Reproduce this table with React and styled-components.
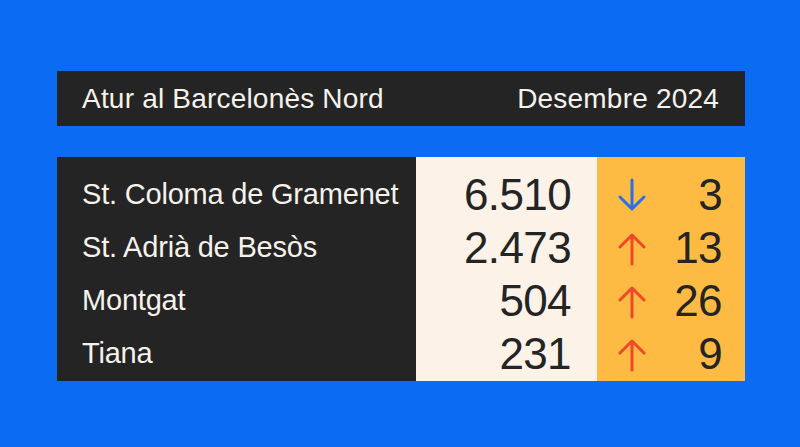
import styled, { createGlobalStyle } from 'styled-components';

const GlobalStyle = createGlobalStyle`
  html, body {
    margin: 0;
    padding: 0;
    background: #0b6cf3;
  }

  body {
    font-family: 'Liberation Sans', Arial, sans-serif;
  }
`;

const Page = styled.div`
  width: 800px;
  height: 447px;
  box-sizing: border-box;
  padding: 71px 0 0 57px;
  display: flex;
  flex-direction: column;
  gap: 31px;
`;

const Header = styled.div`
  width: 688px;
  height: 55px;
  box-sizing: border-box;
  padding: 0 26px 0 25px;
  background: #242424;
  color: #f6f1ea;
  display: flex;
  align-items: center;
  justify-content: space-between;
  font-size: 28px;
  letter-spacing: 0.2px;
`;

const Table = styled.div`
  width: 688px;
  height: 224px;
  display: grid;
  grid-template-columns: 359px 181px 148px;
`;

const Column = styled.div`
  box-sizing: border-box;
  padding: ${({ $pad }) => $pad};
  background: ${({ $bg }) => $bg};
  display: flex;
  flex-direction: column;
  padding-top: 11px;
`;

const Row = styled.div`
  height: 53px;
  display: flex;
  align-items: center;
  justify-content: ${({ $align }) => $align || 'flex-start'};
`;

const Name = styled.span`
  color: #f6f1ea;
  font-size: 29px;
  letter-spacing: -0.2px;
`;

const Value = styled.span`
  color: #242424;
  font-size: 44px;
  letter-spacing: -0.6px;
`;

const Change = styled(Row)`
  justify-content: space-between;
`;

const ArrowWrap = styled.span`
  display: flex;
  width: 28px;
  margin-top: 2px;
`;

const Arrow = ({ dir }) => {
  const color = dir === 'down' ? '#2b6fe6' : '#f0482a';
  const d = dir === 'down'
    ? 'M14 2 V31 M2 19 L14 31 L26 19'
    : 'M14 33 V4 M2 16 L14 4 L26 16';
  return (
    <ArrowWrap>
      <svg width="28" height="35" viewBox="0 0 28 35" fill="none">
        <path d={d} stroke={color} strokeWidth="3" strokeLinecap="round" strokeLinejoin="round" />
      </svg>
    </ArrowWrap>
  );
};

const rows = [
  { name: 'St. Coloma de Gramenet', value: '6.510', dir: 'down', change: '3' },
  { name: 'St. Adrià de Besòs', value: '2.473', dir: 'up', change: '13' },
  { name: 'Montgat', value: '504', dir: 'up', change: '26' },
  { name: 'Tiana', value: '231', dir: 'up', change: '9' },
];

const App = () => (
  <>
    <GlobalStyle />
    <Page>
      <Header>
        <span>Atur al Barcelonès Nord</span>
        <span>Desembre 2024</span>
      </Header>
      <Table>
        <Column $bg="#242424" $pad="0 0 0 25px">
          {rows.map((r) => (
            <Row key={r.name}>
              <Name>{r.name}</Name>
            </Row>
          ))}
        </Column>
        <Column $bg="#fcf2e8" $pad="0 26px 0 0">
          {rows.map((r) => (
            <Row key={r.name} $align="flex-end">
              <Value>{r.value}</Value>
            </Row>
          ))}
        </Column>
        <Column $bg="#fdbb44" $pad="0 23px 0 21px">
          {rows.map((r) => (
            <Change key={r.name}>
              <Arrow dir={r.dir} />
              <Value>{r.change}</Value>
            </Change>
          ))}
        </Column>
      </Table>
    </Page>
  </>
);

export default App;
